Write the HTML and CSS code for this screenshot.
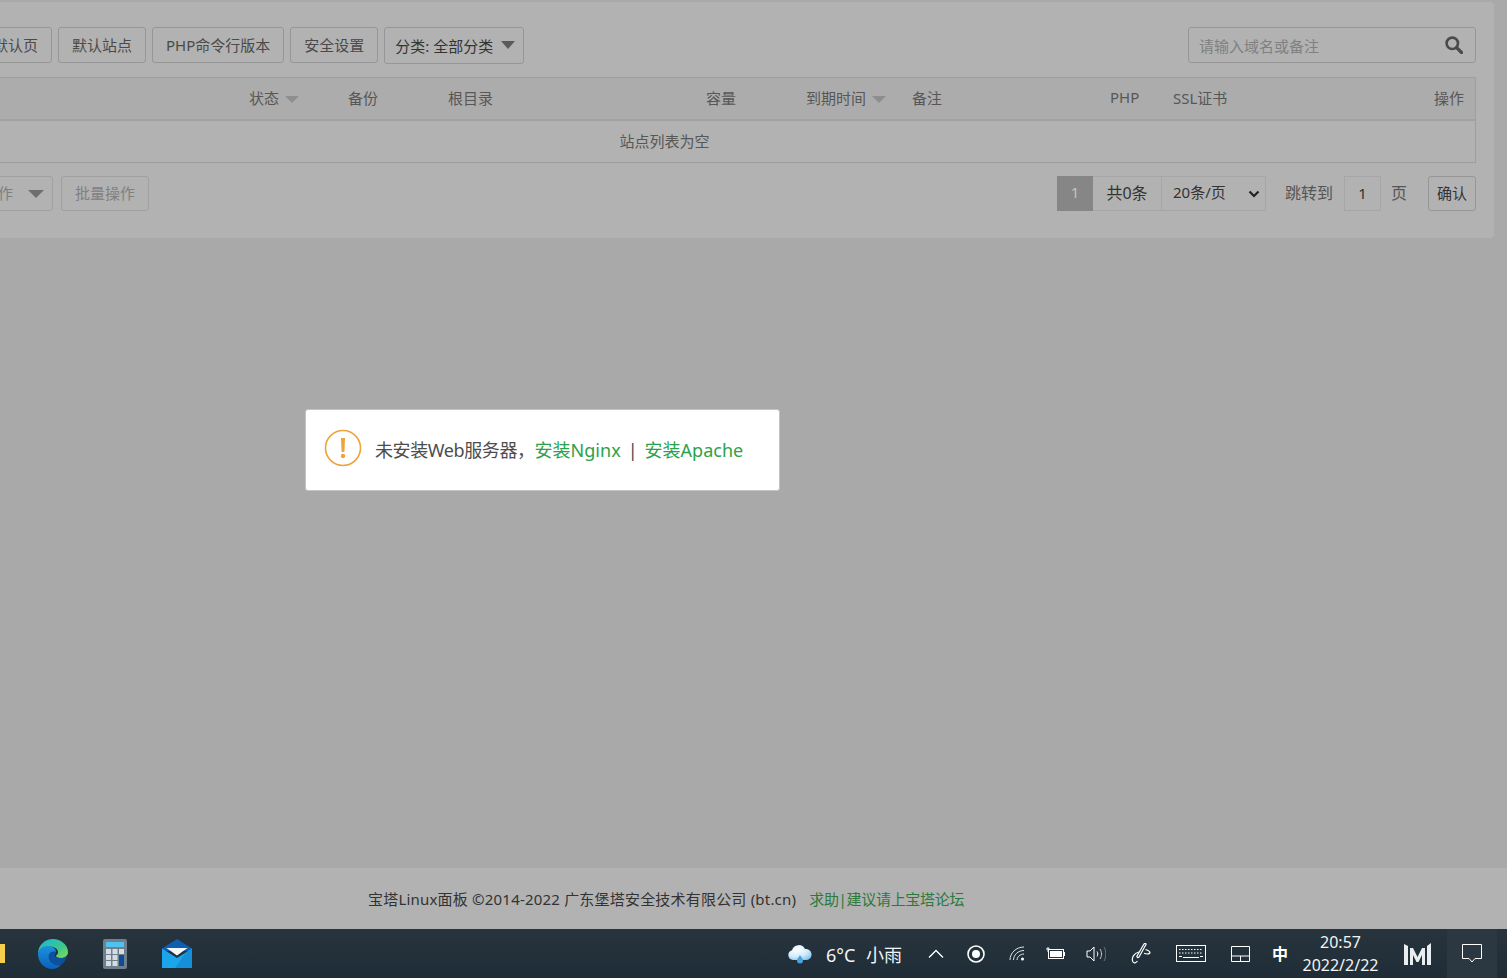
FILE: index.html
```html
<!DOCTYPE html>
<html lang="zh-CN">
<head>
<meta charset="utf-8">
<title>宝塔Linux面板</title>
<link rel="stylesheet" href="styles.css">
</head>
<body>
<main class="content">
  <section class="panel">
    <div class="toolbar">
      <div class="tools">
        <button class="btn">添加站点</button>
        <button class="btn">修改默认页</button>
        <button class="btn">默认站点</button>
        <button class="btn">PHP命令行版本</button>
        <button class="btn">安全设置</button>
        <div class="btn cat"><span>分类: 全部分类</span><i class="tri"></i></div>
      </div>
      <div class="search">
        <span class="ph">请输入域名或备注</span>
        <svg class="search-ic" viewBox="0 0 18 18" width="18" height="18"><circle cx="7.3" cy="7.3" r="5.7" fill="none" stroke="#4a4a4a" stroke-width="2.6"/><path d="M11.5 11.5 16.5 16.5" stroke="#4a4a4a" stroke-width="3.2" stroke-linecap="round"/></svg>
      </div>
    </div>
    <table class="sites">
      <colgroup>
        <col class="c-name"><col class="c-status"><col class="c-bak"><col class="c-root"><col class="c-cap"><col class="c-exp"><col class="c-note"><col class="c-php"><col class="c-ssl"><col class="c-op">
      </colgroup>
      <thead>
        <tr>
          <th></th>
          <th>状态<i class="tri-sm"></i></th>
          <th>备份</th>
          <th>根目录</th>
          <th>容量</th>
          <th>到期时间<i class="tri-sm"></i></th>
          <th>备注</th>
          <th>PHP</th>
          <th>SSL证书</th>
          <th class="right">操作</th>
        </tr>
      </thead>
      <tbody>
        <tr><td colspan="10" class="empty">站点列表为空</td></tr>
      </tbody>
    </table>
    <div class="pager-row">
      <div class="batch">
        <div class="batch-sel"><span>请选择批量操作</span><i class="tri tri-d"></i></div>
        <button class="btn btn-off">批量操作</button>
      </div>
      <div class="pager">
        <span class="pg cur">1</span>
        <span class="pg total">共0条</span>
        <select class="pg size"><option>20条/页</option></select>
        <span class="jump">跳转到</span>
        <span class="pg num">1</span>
        <span class="jump unit">页</span>
        <button class="btn ok">确认</button>
      </div>
    </div>
  </section>
</main>
<footer class="foot">
  <span class="foot-copy">宝塔Linux面板 ©2014-2022 广东堡塔安全技术有限公司 (bt.cn)</span>
  <a class="foot-link">求助|建议请上宝塔论坛</a>
</footer>
<nav class="taskbar">
  <div class="apps">
    <i class="folder"></i>
    <svg class="edge" viewBox="0 0 32 32" width="32" height="32">
      <defs>
        <linearGradient id="eg1" x1="0" y1="0" x2="1" y2="1"><stop offset="0" stop-color="#1bb4d8"/><stop offset=".6" stop-color="#3cc98c"/><stop offset="1" stop-color="#8adb4e"/></linearGradient>
        <linearGradient id="eg2" x1="0" y1="0" x2="0" y2="1"><stop offset="0" stop-color="#1c90df"/><stop offset="1" stop-color="#0b62b8"/></linearGradient>
      </defs>
      <path d="M1 16C1 7 8 1 16 1c8 0 15 6 15 13 0 4-3 6-7 6-3 0-5-1-5-2 0-1 2-1 2-4 0-3-4-6-9-5C7 10 1 13 1 16Z" fill="url(#eg1)"/>
      <path d="M1 16c0-5 5-8 10-8 5 0 8 3 8 6-5-1-8 2-7 6 1 5 7 8 12 7-3 3-6 4-9 4C7 31 1 24 1 16Z" fill="url(#eg2)"/>
      <path d="M12 20c-1-4 2-7 7-6 0 2-2 3-1 4 1 2 4 2 6 2 3 0 5-1 6-3-1 5-3 8-6 10-5 1-11-2-12-7Z" fill="#0e4f9e"/>
    </svg>
    <svg class="calc" viewBox="0 0 24 30" width="24" height="30">
      <rect width="24" height="30" rx="2" fill="#6f7f8c"/>
      <rect x="3" y="3" width="18" height="5" fill="#4fc3ee"/>
      <g fill="#d5dde3"><rect x="3" y="10" width="5" height="5"/><rect x="9.500" y="10" width="5" height="5"/><rect x="16" y="10" width="5" height="5"/><rect x="3" y="16" width="5" height="5"/><rect x="9.500" y="16" width="5" height="5"/><rect x="3" y="22" width="5" height="5"/><rect x="9.500" y="22" width="5" height="5"/></g>
      <rect x="16" y="16" width="5" height="11" fill="#0f4c97"/>
    </svg>
    <svg class="mail" viewBox="0 0 30 29" width="30" height="29">
      <path d="M0 9.500 15 0l15 9.500V12H0Z" fill="#0f5fae"/>
      <path d="M0 9.500 15 19l15-9.500V29H0Z" fill="#1ba5ec"/>
      <path d="M30 29H13L23 14.500l7-5Z" fill="#1590d8"/>
      <path d="M4.500 9 25.500 9 15 16.500Z" fill="#f4f7fa"/>
    </svg>
  </div>
  <div class="tray">
    <svg class="t-weather" viewBox="0 0 26 20" width="26" height="20">
      <defs><radialGradient id="wg" cx=".35" cy=".3" r=".8"><stop offset="0" stop-color="#ffffff"/><stop offset=".6" stop-color="#d3ecfb"/><stop offset="1" stop-color="#85c4ee"/></radialGradient></defs>
      <path d="M6 16a5 5 0 0 1-1-9.800A7 7 0 0 1 18 5a5.500 5.500 0 0 1 2 11Z" fill="url(#wg)"/>
      <path d="M13 11c2 3 3 4 3 5.500a3 3 0 0 1-6 0C10 15 11 14 13 11Z" fill="#4aa3e0"/>
    </svg>
    <span class="t-temp">6°C 小雨</span>
    <svg class="t-up" viewBox="0 0 16 9" width="16" height="9"><path d="M1 8.500 8 1.500l7 7" fill="none" stroke="#fff" stroke-width="1.300"/></svg>
    <svg class="t-rec" viewBox="0 0 18 18" width="18" height="18"><circle cx="9" cy="9" r="8" fill="none" stroke="#fff" stroke-width="1.600"/><circle cx="9" cy="9" r="4" fill="#fff"/></svg>
    <svg class="t-wifi" viewBox="0 0 16 15" width="16" height="15"><g fill="none" stroke="#dfe5e8" stroke-width="1"><path d="M1 14C1 7 7 1 15 1"/><path d="M4.500 14C4.500 9 9 4.500 15 4.500"/><path d="M8 14c0-3 3-6 7-6"/></g><circle cx="13.500" cy="13" r="1.500" fill="#fff"/></svg>
    <svg class="t-batt" viewBox="0 0 20 13" width="20" height="13"><path d="M1 2h2V0M5 2H3M3 2v3" stroke="#fff" fill="none"/><rect x="3.500" y="2.500" width="15" height="9" fill="none" stroke="#fff"/><rect x="5" y="4" width="12" height="6" fill="#fff"/><rect x="18.500" y="5" width="1.500" height="4" fill="#fff"/></svg>
    <svg class="t-vol" viewBox="0 0 20 16" width="20" height="16"><path d="M1 5h3l4-4v14l-4-4H1Z" fill="none" stroke="#fff"/><g fill="none" stroke="#fff"><path d="M11 5.500c1 1.500 1 3.500 0 5"/></g><path d="M14 3c2 3 2 7 0 10" fill="none" stroke="#c6ccd0"/><path d="M18 1c2.400 4 2.400 10 0 14" fill="none" stroke="#6d787f"/></svg>
    <svg class="t-pen" viewBox="0 0 20 21" width="20" height="21"><g fill="none" stroke="#fff" stroke-width="1.200"><path d="M15 1.500 8 14c-.6 1.200-2.600.2-2-1L13 1c.5-1 2.500-.5 2 .5Z"/><path d="M8 9C3 10 0 15 2 19c1 1.500 3 1 4.500-1"/><path d="M14.500 6.500c3 .8 5 2.300 4.300 3.500-1 1.200-3.300 1.200-5.800.3"/></g></svg>
    <svg class="t-kbd" viewBox="0 0 30 17" width="30" height="17"><rect x=".5" y=".5" width="29" height="16" fill="none" stroke="#fff"/><path d="M3 4.500h24M3 8h24" stroke="#fff" stroke-dasharray="1.500 1.500"/><path d="M3 11.500h3M24 11.500h3M7 12.500h16" stroke="#fff"/></svg>
    <svg class="t-pad" viewBox="0 0 19 16" width="19" height="16"><path d="M.5.500h18v15H.5ZM.5 10h18M9.500 10v5.500" fill="none" stroke="#fff"/></svg>
    <span class="t-ime">中</span>
    <div class="t-clock"><span>20:57</span><span>2022/2/22</span></div>
    <svg class="t-logo" viewBox="0 0 27 22" width="27" height="22"><path d="M0 1 4 3V22H0ZM6 5h3l4.500 9L18 5h3V22h-3V12l-3.500 7h-2L9 12v10H6ZM23 3l4-3v22h-4Z" fill="#e9edf0"/></svg>
    <div class="t-action"><svg viewBox="0 0 20 19" width="20" height="19"><path d="M.5.500h19v14h-6.500L10 18l-3-3.500H.5Z" fill="none" stroke="#fff"/></svg></div>
  </div>
</nav>
<aside class="toast">
  <svg class="toast-ic" viewBox="0 0 38 38" width="38" height="38">
    <circle cx="19" cy="19" r="17.500" fill="none" stroke="#eda43a" stroke-width="1.600"/>
    <path d="M17 9h4l-.6 14h-2.800Z" fill="#eda43a"/>
    <circle cx="19" cy="27" r="2.200" fill="#eda43a"/>
  </svg>
  <p class="toast-text"><span class="lead">未安装Web服务器，</span><a class="ln">安装Nginx</a><span class="sep">|</span><a class="ln">安装Apache</a></p>
</aside>
</body>
</html>
```
FILE: styles.css
```css
* { box-sizing: border-box; }
html, body { margin: 0; height: 100%; }
body {
  display: flex;
  flex-direction: column;
  height: 978px;
  overflow: hidden;
  background: #a9a9a9;
  font-family: "Noto Sans", "Noto Sans CJK SC", sans-serif;
  font-size: 15px;
  color: #4a4a4a;
}
.content { flex: 1; padding-top: 2px; }
.panel {
  width: 1655px;
  height: 236px;
  margin-left: -161px;
  padding: 25px 18px 0 15px;
  background: #b2b2b2;
  border-radius: 4px;
}
.toolbar { display: flex; justify-content: space-between; align-items: flex-start; height: 37px; margin-bottom: 13px; }
.tools { display: flex; gap: 6px; margin-left: 1px; }
.btn {
  display: flex;
  align-items: center;
  justify-content: center;
  height: 36px;
  padding: 0 13px 2px;
  background: #b2b2b2;
  border: 1px solid #969696;
  border-radius: 3px;
  font: inherit;
  color: #4a4a4a;
  white-space: nowrap;
}
.cat { width: 140px; height: 37px; padding: 0 8px 1px 10px; justify-content: space-between; color: #333; }
.tri { width: 0; height: 0; border-left: 7px solid transparent; border-right: 7px solid transparent; border-top: 8px solid #5a5a5a; margin-top: -1px; }
.search {
  position: relative;
  display: flex;
  align-items: center;
  width: 288px;
  height: 36px;
  padding: 0 12px 0 10px;
  border: 1px solid #969696;
  border-radius: 3px;
  justify-content: space-between;
}
.ph { color: #808080; }
.sites { width: 1622px; height: 86px; table-layout: fixed; border-collapse: separate; border-spacing: 0; border: 1px solid #9e9e9e; border-left: 0; }
.c-name { width: 385px; } .c-status { width: 99px; } .c-bak { width: 100px; } .c-root { width: 258px; } .c-cap { width: 100px; }
.c-exp { width: 106px; } .c-note { width: 198px; } .c-php { width: 63px; } .c-ssl { width: 217px; }
.sites th {
  height: 43px;
  padding: 0 11px 3px 10px;
  background: #acacac;
  border-bottom: 2px solid #a1a1a1;
  font-weight: 400;
  text-align: left;
  color: #575757;
  white-space: nowrap;
}
.sites th.right { text-align: right; }
.tri-sm { display: inline-block; width: 0; height: 0; margin-left: 6px; vertical-align: 1px; border-left: 7px solid transparent; border-right: 7px solid transparent; border-top: 7px solid #8e8e8e; }
.empty { padding: 0 0 2px; text-align: center; color: #575757; }
.pager-row { display: flex; justify-content: space-between; margin-top: 13px; height: 35px; }
.batch { display: flex; gap: 8px; padding-left: 33px; }
.batch-sel { display: flex; align-items: center; justify-content: space-between; width: 166px; height: 35px; padding: 0 8px 2px 20px; border: 1px solid #a0a0a0; border-radius: 3px; color: #808080; }
.tri-d { border-left-width: 8px; border-right-width: 8px; border-top-color: #6e6e6e; margin-top: 2px; }
.btn-off { height: 35px; padding-bottom: 3px; color: #808080; border-color: #a0a0a0; }
.pager { display: flex; align-items: center; }
.pg { display: flex; align-items: center; justify-content: center; height: 35px; border: 1px solid #a6a6a6; border-left: 0; color: #333; font: inherit; background: transparent; }
.cur { width: 36px; padding-bottom: 3px; background: #868686; border: 0; color: #c4c4c4; }
.total { width: 69px; padding-bottom: 4px; color: #333; font-size: 16px; }
.size {
  appearance: none;
  width: 104px;
  padding: 0 0 3px 11px;
  color: #333;
  border-radius: 0;
  background: url("data:image/svg+xml,%3Csvg xmlns='http://www.w3.org/2000/svg' width='12' height='8'%3E%3Cpath d='M1.500 1.500 6 6l4.500-4.500' fill='none' stroke='%23222' stroke-width='2.200'/%3E%3C/svg%3E") no-repeat right 5px center;
}
.jump { margin: 0 11px 4px 19px; color: #555; font-size: 16px; }
.num { width: 37px; padding-bottom: 2px; border-left: 1px solid #a6a6a6; }
.unit { margin: 0 21px 4px 10px; }
.ok { width: 48px; height: 35px; padding: 0 0 3px; color: #333; }
.foot { display: flex; align-items: center; gap: 13px; height: 61px; padding-left: 368px; background: #b2b2b2; color: #333; }
.foot-copy { letter-spacing: .2px; }
.foot-link { letter-spacing: -.3px; color: #2b7a3c; }
.taskbar { display: flex; justify-content: space-between; height: 49px; background: linear-gradient(#27343d, #1f2d38); color: #fff; }
.apps { display: flex; align-items: center; }
.folder { width: 5px; height: 19px; background: #f7cf4b; }
.edge { margin-left: 32px; }
.calc { margin-left: 34px; }
.mail { margin-left: 35px; }
.tray { display: flex; align-items: center; }
.t-temp { margin: 0 26px 0 13px; font-size: 18px; word-spacing: 6px; color: #f2f4f5; }
.t-up { margin-right: 23px; }
.t-rec { margin-right: 24px; }
.t-wifi { margin-right: 20px; }
.t-batt { margin-right: 21px; }
.t-vol { margin-right: 25px; }
.t-pen { margin-right: 25px; }
.t-kbd { margin-right: 25px; }
.t-pad { margin-right: 22px; }
.t-ime { width: 16px; margin-right: 15px; font-size: 16px; font-weight: 700; line-height: 1; }
.t-clock { display: flex; flex-direction: column; align-items: center; width: 75px; margin-right: 26px; font-size: 16px; line-height: 23px; color: #f2f4f5; }
.t-logo { margin-right: 16px; }
.t-action { display: flex; align-items: center; justify-content: center; width: 50px; height: 49px; background: #2b3842; margin-right: 10px; }
.toast {
  position: fixed;
  left: 305px;
  top: 409px;
  display: flex;
  align-items: center;
  width: 475px;
  height: 82px;
  padding: 0 0 4px 18px;
  background: #fff;
  border: 1px solid #c4c4c4;
  border-radius: 3px;
}
.toast-text { margin: 2px 0 0 13px; font-size: 18px; color: #4d4d4d; white-space: nowrap; }
.lead { letter-spacing: -.4px; }
.ln { color: #2ca24a; }
.sep { margin: 0 7px; color: #4d4d4d; }
```
